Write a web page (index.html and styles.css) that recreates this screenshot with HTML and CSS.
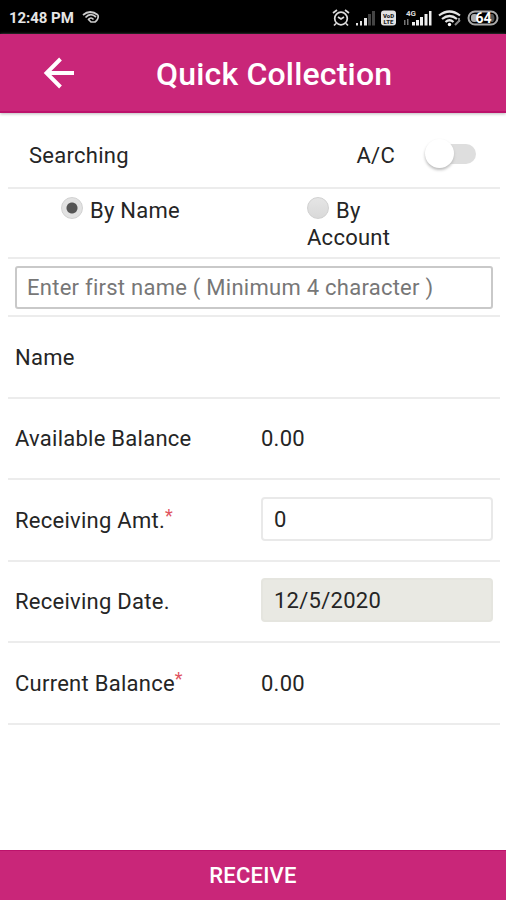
FILE: index.html
```
<!DOCTYPE html>
<html lang="en">
<head>
<meta charset="utf-8">
<title>Quick Collection</title>
<link rel="stylesheet" href="styles.css">
</head>
<body>
<div class="screen">
  <div class="status">
    <span class="clock">12:48 PM</span>
    <svg class="cast" width="18" height="14" viewBox="0 0 18 14" fill="none" stroke="#ccc" stroke-width="1.700"><path d="M1 5Q8-1 16 5M3.500 7.500Q8.500 2 14 7M6.500 9.500q2.500-3 5 0"/><path d="M16 5q1 4-3 7H9l-3-3"/></svg>
    <svg class="indicators" width="168" height="20" viewBox="0 0 168 20">
      <g fill="none" stroke="#ddd" stroke-width="1.700"><circle cx="9" cy="10.500" r="6.300"/><path d="M6 9l3 2 3-2M1 5l4-3M17 5l-4-3M4 15.500l-2 2M14 15.500l2 2"/></g>
      <path fill="#e4e4e4" d="M24 15h2v2.500h-2zM28 13h2v4.500h-2zM32 10h3v7.500h-3z"/><path fill="#444" d="M36 6h3v11.500h-3zM40 3h3v14.500h-3z"/>
      <rect x="49" y="2.500" width="15" height="15" rx="3" fill="#e2e2e2"/>
      <text class="volte" x="56.500" y="9.500">VoD</text><text class="volte" x="56.500" y="16">LTE</text>
      <text class="net" x="79" y="8">4G</text>
      <path fill="#777" d="M72 12h1.500v5H72zM75 11h1.500v6H75z"/>
      <path fill="#eee" d="M80 14h3v3.500h-3zM84 12h3v5.500h-3zM88 9h3v8.500h-3zM92.500 6h3v11.500h-3zM97 3h2.500v14.500H97z"/>
      <g fill="none" stroke="#e4e4e4" stroke-width="2.200"><path d="M107 7.500q10.500-8 21 0M110 11q7.500-6 15 0M113.500 14q4-3.500 8 0"/></g><circle cx="117.500" cy="16.500" r="1.700" fill="#fff"/><path d="M123 17l5-5M127 10v4" stroke="#888" stroke-width="2"/>
      <rect x="136.500" y="3.500" width="29" height="13" rx="6.500" fill="none" stroke="#aaa" stroke-width="2"/><rect x="139" y="6" width="7" height="8" rx="3" fill="#aaa"/><path d="M158 6h3q3 4 0 8h-3z" fill="#555"/>
      <text class="battery" x="151.500" y="15">64</text>
    </svg>
  </div>
  <header class="appbar">
    <svg class="back" width="32" height="32" viewBox="0 0 32 32" fill="none" stroke="#fff" stroke-width="3.900"><path d="M31 16H4M17.500 2L3.500 16l14 14"/></svg>
    <h1>Quick Collection</h1>
  </header>
  <main class="form">
    <div class="row search"><span>Searching</span><span class="ac">A/C</span><span class="switch"><span class="knob"></span></span></div>
    <div class="row modes">
      <div class="mode"><span class="radio checked"></span>By Name</div>
      <div class="mode account"><span class="radio"></span>By<br>Account</div>
    </div>
    <div class="row entry"><div class="search-input">Enter first name ( Minimum 4 character )</div></div>
    <div class="row field"><span>Name</span></div>
    <div class="row field"><span class="balance">Available Balance</span><span>0.00</span></div>
    <div class="row field"><span>Receiving Amt.<sup>*</sup></span><div class="box">0</div></div>
    <div class="row field"><span>Receiving Date.</span><div class="box disabled">12/5/2020</div></div>
    <div class="row field"><span>Current Balance<sup>*</sup></span><span>0.00</span></div>
  </main>
  <div class="receive">RECEIVE</div>
</div>
</body>
</html>
```
FILE: styles.css
```
* { box-sizing: border-box; }
body { margin: 0; background: #fff; font-family: Roboto, "Liberation Sans", sans-serif; color: #252525; }
.screen { height: 900px; display: flex; flex-direction: column; }
.status { height: 34px; flex: none; background: #000; color: #e6e6e6; display: flex; align-items: center; padding: 1px 6px 0 9px; }
.clock { font-size: 15px; font-weight: 700; letter-spacing: -.05px; width: 73px; white-space: nowrap; }
.cast { margin-top: -2px; }
.indicators { margin-left: auto; }
.volte { font-size: 6px; font-weight: 900; text-anchor: middle; fill: #222; }
.net { font-size: 8px; font-weight: 700; text-anchor: middle; fill: #ddd; }
.battery { font-size: 14px; font-weight: 700; text-anchor: middle; fill: #fff; }
.appbar { height: 79px; flex: none; background: #c92679; border-bottom: 2px solid #bc126b; box-shadow: 0 1px 3px #bbb; display: flex; align-items: center; padding-left: 43px; color: #fff; }
.back { flex: none; }
h1 { margin: 2px 0 0 81px; font-size: 32px; line-height: 38px; font-weight: 500; letter-spacing: .18px; white-space: nowrap; }
.form { flex: 1; padding: 5px 6px 0 8px; font-size: 22px; letter-spacing: .26px; }
.row { border-bottom: 2px solid #ececec; }
.search { height: 71px; display: flex; align-items: center; padding: 6px 24px 0 21px; }
.ac { margin-left: auto; }
.switch { width: 44px; height: 20px; border-radius: 10px; background: #dedede; margin: -4px 0 0 37px; }
.knob { display: block; width: 29px; height: 29px; border-radius: 50%; background: #fff; box-shadow: 0 2px 3px #bbb; margin: -5px 0 0 -7px; }
.modes { height: 70px; display: grid; grid-template-columns: 246px 1fr; padding: 8px 0 0 53px; line-height: 27px; }
.radio { display: inline-block; width: 22px; height: 22px; border-radius: 50%; background: linear-gradient(#e5e5e5, #d9d9d9); border: 1px solid #d1d1d1; margin-right: 7px; vertical-align: -1px; }
.checked { background: radial-gradient(circle, #555 0 5px, #e2e2e2 6px); }
.entry { height: 58px; padding: 7px 7px 0 7px; }
.search-input { height: 43px; border: 2px solid #c9c9c9; border-radius: 3px; padding-left: 10px; line-height: 39px; color: #777; white-space: nowrap; }
.field { height: 81.5px; display: grid; grid-template-columns: 246px 1fr; align-items: center; padding: 1px 7px 0; }
.box { height: 44px; border: 2px solid #e9e9e9; border-radius: 4px; padding-left: 11px; line-height: 41px; margin-top: -3px; }
.disabled { background: #e9e9e3; border-color: #e5e5df; }
sup { font-size: 18px; line-height: 0; color: #df5360; vertical-align: 6px; letter-spacing: 0; }
.receive { height: 50px; flex: none; background: #c92679; border-top: 1px solid #bc126b; color: #fff; text-align: center; font-size: 22px; font-weight: 500; letter-spacing: .2px; line-height: 49px; }
```
